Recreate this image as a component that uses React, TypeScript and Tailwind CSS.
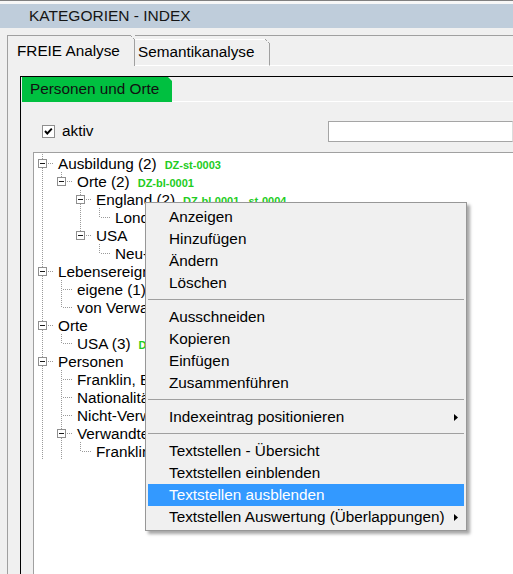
type Row = {
  label: string;
  level: number;
  code?: string;
  open?: boolean;
  guides: boolean[];
  next: boolean;
};

const rows: Row[] = [
  { label: "Ausbildung (2)", level: 0, code: "DZ-st-0003", open: true, guides: [], next: true },
  { label: "Orte (2)", level: 1, code: "DZ-bl-0001", open: true, guides: [true], next: false },
  { label: "England (2)", level: 2, code: "DZ-bl-0001 , st-0004", open: true, guides: [true, false], next: true },
  { label: "London", level: 3, guides: [true, false, true], next: false },
  { label: "USA", level: 2, open: true, guides: [true, false], next: false },
  { label: "Neu-England", level: 3, guides: [true, false, false], next: false },
  { label: "Lebensereignisse (2)", level: 0, open: true, guides: [], next: true },
  { label: "eigene (1)", level: 1, guides: [true], next: true },
  { label: "von Verwandten (1)", level: 1, guides: [true], next: false },
  { label: "Orte", level: 0, open: true, guides: [], next: true },
  { label: "USA (3)", level: 1, code: "DZ-bl-0002", guides: [true], next: false },
  { label: "Personen", level: 0, open: true, guides: [], next: true },
  { label: "Franklin, Benjamin", level: 1, guides: [true], next: true },
  { label: "Nationalität", level: 1, guides: [true], next: true },
  { label: "Nicht-Verwandte", level: 1, guides: [true], next: true },
  { label: "Verwandte", level: 1, open: true, guides: [true], next: true },
  { label: "Franklin, Josiah", level: 2, guides: [true, true], next: false },
];

type Item = { label: string; sub?: boolean; active?: boolean } | "sep";

const menu: Item[] = [
  { label: "Anzeigen" },
  { label: "Hinzufügen" },
  { label: "Ändern" },
  { label: "Löschen" },
  "sep",
  { label: "Ausschneiden" },
  { label: "Kopieren" },
  { label: "Einfügen" },
  { label: "Zusammenführen" },
  "sep",
  { label: "Indexeintrag positionieren", sub: true },
  "sep",
  { label: "Textstellen - Übersicht" },
  { label: "Textstellen einblenden" },
  { label: "Textstellen ausblenden", active: true },
  { label: "Textstellen Auswertung (Überlappungen)", sub: true },
];

const dots = "#9a9a9a";

function Guide({ on }: { on: boolean }) {
  return (
    <svg width="19" height="18" className="shrink-0" shapeRendering="crispEdges">
      {on && <line x1="8.5" y1="0" x2="8.5" y2="18" stroke={dots} strokeDasharray="1 1" />}
    </svg>
  );
}

function Joint({ row }: { row: Row }) {
  return (
    <svg width="19" height="18" className="shrink-0" shapeRendering="crispEdges">
      <line x1="8.5" y1="0" x2="8.5" y2={row.next ? 18 : 10} stroke={dots} strokeDasharray="1 1" />
      <line x1="10" y1="9.5" x2="19" y2="9.5" stroke={dots} strokeDasharray="1 1" />
      {row.open && (
        <>
          <rect x="4.5" y="5.5" width="8" height="8" fill="#fff" stroke="#8f8f8f" />
          <line x1="6" y1="9.5" x2="11" y2="9.5" stroke="#1a1a1a" />
        </>
      )}
    </svg>
  );
}

// diagonal cut on the top-right of a classic tab
function Corner() {
  return (
    <svg width="5" height="5" className="absolute -top-px -right-px" shapeRendering="crispEdges">
      <polygon points="0,0 5,0 5,5" fill="#f0f0f0" />
      <line x1="0" y1="0" x2="5" y2="5" stroke="#a0a0a0" strokeDasharray="1 1" />
    </svg>
  );
}

export default function App() {
  return (
    <div className="relative w-[513px] h-[574px] overflow-hidden bg-[#f0f0f0] font-['Liberation_Sans',Arial,sans-serif] text-black">
      <div className="h-px bg-[#808080]" />
      <div className="h-[3px] bg-[#f7f7f7]" />
      <div className="h-[24px] bg-[#bfcddb] pl-[29px] flex items-center text-[15.5px] text-[#151515]">
        KATEGORIEN - INDEX
      </div>
      <div className="h-[7px]" />

      {/* outer tab control */}
      <div className="ml-[7px] h-[540px] border-l border-t border-[#a0a0a0] flex flex-col">
        <div className="flex h-[30px] shrink-0 text-[15.3px]">
          <div className="relative w-[127px] border-r border-[#a0a0a0] pl-[9px] flex items-center">
            FREIE Analyse
            <Corner />
          </div>
          <div className="relative mt-[3px] w-[135px] border-t border-t-white border-r border-r-[#a0a0a0] border-b border-b-white pl-[3px] flex items-center">
            Semantikanalyse
            <Corner />
          </div>
          <div className="flex-1 border-b border-white" />
        </div>

        <div className="flex-1 pl-[12px] pt-[10px] flex flex-col">
          {/* inner frame */}
          <div className="flex-1 border-l border-t border-black flex flex-col">
            <div className="flex h-[25px] shrink-0">
              <div className="ml-px w-[150px] bg-[#00c040] pl-[8px] flex items-center text-[15.3px] text-[#111] [clip-path:polygon(0_0,calc(100%-4px)_0,100%_4px,100%_100%,0_100%)]">
                Personen und Orte
              </div>
              <div className="flex-1 border-b border-white" />
            </div>

            <div className="mt-[19px] h-[21px] flex items-center shrink-0">
              <div className="w-[307px] flex items-center">
                <div className="ml-[21px] w-[13px] h-[13px] border border-[#8e8e8e] bg-white flex items-center justify-center">
                  <svg width="11" height="11" viewBox="0 0 11 11">
                    <polyline points="2,5 4.3,7.5 8.8,2.6" fill="none" stroke="#000" strokeWidth="1.9" />
                  </svg>
                </div>
                <span className="ml-[7px] text-[15.3px]">aktiv</span>
              </div>
              <div className="w-[185px] h-[21px] border border-[#a5a5a5] border-r-[#dcdcdc] bg-white" />
            </div>

            {/* tree */}
            <div className="mt-[10px] ml-[12px] flex-1 border-l border-t border-[#a0a0a0] bg-white pt-px">
              {rows.map((row, i) => (
                <div key={i} className="flex h-[18px]">
                  {row.guides.map((g, j) => (
                    <Guide key={j} on={g} />
                  ))}
                  <Joint row={row} />
                  <div className="ml-[5px] pt-px flex items-baseline whitespace-nowrap text-[15.3px] leading-[18px]">
                    <span>{row.label}</span>
                    {row.code && (
                      <span className="ml-[8px] text-[11px] font-bold text-[#22cc22]">{row.code}</span>
                    )}
                  </div>
                </div>
              ))}
            </div>
          </div>
        </div>
      </div>

      {/* context menu */}
      <div className="absolute left-[145px] top-[202px] w-[322px] border border-[#979797] bg-[#f0f0f0] px-[2px] pt-[3px] pb-[2px] shadow-[3px_3px_3px_rgba(0,0,0,0.35)] text-[15.3px]">
        {menu.map((item, i) =>
          item === "sep" ? (
            <div key={i} className="h-[12px] pt-[5px]">
              <div className="h-px bg-[#a0a0a0]" />
            </div>
          ) : (
            <div
              key={i}
              className={
                item.active
                  ? "h-[22px] flex items-center pl-[21px] pr-[6px] bg-[#3399ff] text-white"
                  : "h-[22px] flex items-center pl-[21px] pr-[6px]"
              }
            >
              <span className="whitespace-nowrap">{item.label}</span>
              {item.sub && (
                <svg width="4" height="7" className="ml-auto">
                  <polygon points="0,0 4,3.5 0,7" fill="#000" />
                </svg>
              )}
            </div>
          )
        )}
      </div>
    </div>
  );
}
